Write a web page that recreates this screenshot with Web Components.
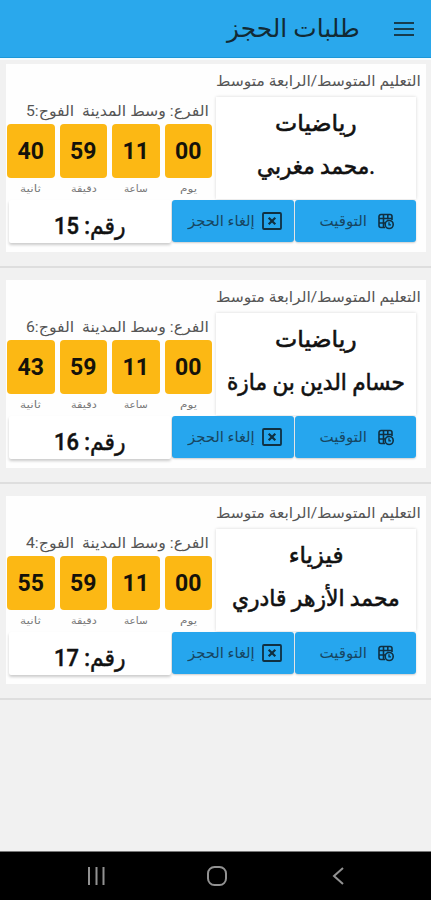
<!DOCTYPE html>
<html lang="ar" dir="rtl">
<head>
<meta charset="utf-8">
<meta name="viewport" content="width=device-width, initial-scale=1">
<title>طلبات الحجز</title>
<style>
  body {
    margin: 0;
    background: #f1f1f1;
    color: #111;
    font-family: Roboto, "DejaVu Sans", sans-serif;
  }
</style>
</head>
<body>
<booking-app></booking-app>

<script>
// One line of text, squeezed or stretched to a given width
class FitText extends HTMLElement {
  constructor() {
    super();
    this.attachShadow({ mode: 'open' });
  }

  connectedCallback() {
    const width = Number(this.getAttribute('width'));
    this.shadowRoot.innerHTML = `
      <style>
        :host { display: flex; width: ${width}px; flex: none; }
        span { display: block; flex: none; transform-origin: 100% 50%; white-space: pre; }
      </style>
      <span><slot></slot></span>
    `;
    const span = this.shadowRoot.querySelector('span');
    span.style.transform = `scaleX(${width / span.offsetWidth})`;
  }
}
customElements.define('fit-text', FitText);

class AppBar extends HTMLElement {
  constructor() {
    super();
    this.attachShadow({ mode: 'open' }).innerHTML = `
      <style>
        :host {
          display: flex;
          box-sizing: border-box;
          height: 60px;
          padding: 0 17px 0 0;
          gap: 34px;
          align-items: center;
          background: #2aa8ec;
          border-bottom: 2px solid #f4fcff;
          box-shadow: inset 0 -1px #1c98d8;
          color: #122a34;
          font-size: 25px;
          line-height: 56px;
        }
        svg { display: block; flex: none; }
      </style>
      <svg width="20" height="14" viewBox="0 0 20 14" stroke="#173c4d" stroke-width="2">
        <path d="M0 1h20M0 7h20M0 13h20"/>
      </svg>
      <slot></slot>
    `;
  }
}
customElements.define('app-bar', AppBar);

class TimeBox extends HTMLElement {
  connectedCallback() {
    this.attachShadow({ mode: 'open' }).innerHTML = `
      <style>
        :host { display: flex; flex-direction: column; align-items: center; }
        b {
          display: block;
          width: 100%;
          height: 54px;
          border-radius: 4px;
          background: #fcb814;
          color: #15120a;
          font: bold 23px/56px Roboto, sans-serif;
          text-align: center;
        }
        fit-text { margin-top: 2px; font-size: 10px; line-height: 18px; color: #777; }
      </style>
      <b>${this.getAttribute('value')}</b>
      <fit-text width="${this.getAttribute('label-width')}">${this.getAttribute('label')}</fit-text>
    `;
  }
}
customElements.define('time-box', TimeBox);

class ActionButton extends HTMLElement {
  constructor() {
    super();
    this.attachShadow({ mode: 'open' }).innerHTML = `
      <style>
        :host {
          display: flex;
          box-sizing: border-box;
          height: 42px;
          align-items: center;
          border-radius: 3px;
          background: #26a6ee;
          box-shadow: 0 1px 2px rgba(0, 0, 0, .2);
          color: #174662;
          font-size: 15px;
          line-height: 40px;
        }
        ::slotted(svg) { margin: var(--icon-margin); }
      </style>
      <slot name="icon"></slot>
      <slot></slot>
    `;
  }
}
customElements.define('action-button', ActionButton);

class BookingCard extends HTMLElement {
  connectedCallback() {
    const get = name => this.getAttribute(name);
    this.attachShadow({ mode: 'open' }).innerHTML = `
      <style>
        :host {
          display: block;
          box-sizing: border-box;
          height: 204px;
          margin-bottom: 12px;
          padding: 0 5px 0 6px;
          border-bottom: 2px solid #dedede;
        }
        .card {
          display: grid;
          box-sizing: border-box;
          height: 188px;
          padding: 0 5px 0 0;
          grid-template-rows: 33px 103px 42px;
          background: #fefefe;
        }
        .level { font-size: 15px; line-height: 35px; color: #555; }
        .middle, .bottom { display: flex; }
        .middle { padding-right: 5px; justify-content: space-between; }
        .lesson {
          display: flex;
          width: 200px;
          height: 102px;
          flex-direction: column;
          align-items: center;
          background: #fff;
          box-shadow: 0 0 3px rgba(0, 0, 0, .16);
          font-size: 23px;
          line-height: 43px;
          color: #111;
          -webkit-text-stroke: .6px #111;
        }
        .lesson fit-text:first-child { margin-top: 5px; }
        .branch { height: 27px; margin-right: 3px; font-size: 15px; line-height: 28px; color: #555; }
        .timer { width: 205px; margin-left: 1px; }
        .boxes { display: grid; grid-template-columns: repeat(4, 1fr); gap: 5px; }
        .bottom { padding-right: 5px; gap: 1px; }
        .time { width: 121px; --icon-margin: 0 22px 0 11px; }
        .cancel { width: 122px; --icon-margin: 0 12px 0 7px; }
        .number {
          display: flex;
          width: 162px;
          height: 43px;
          justify-content: center;
          background: #fff;
          border-radius: 2px;
          box-shadow: 0 2px 3px rgba(0, 0, 0, .2);
          font-size: 24px;
          font-weight: 500;
          line-height: 52px;
          color: #111;
          -webkit-text-stroke: .5px #111;
        }
        svg { display: block; flex: none; fill: none; stroke: #102f40; }
      </style>
      <div class="card">
        <fit-text class="level" width="205">التعليم المتوسط/الرابعة متوسط</fit-text>
        <div class="middle">
          <div class="lesson">
            <fit-text width="${get('subject-width')}">${get('subject')}</fit-text>
            <fit-text width="${get('teacher-width')}">${get('teacher')}</fit-text>
          </div>
          <div class="timer">
            <fit-text class="branch" width="183">الفرع: وسط المدينة  الفوج:${get('group')}</fit-text>
            <div class="boxes">
              <time-box value="00" label="يوم" label-width="17"></time-box>
              <time-box value="11" label="ساعة" label-width="24"></time-box>
              <time-box value="59" label="دقيقة" label-width="26"></time-box>
              <time-box value="${get('seconds')}" label="ثانية" label-width="21"></time-box>
            </div>
          </div>
        </div>
        <div class="bottom">
          <action-button class="time">
            <svg slot="icon" width="16" height="17" viewBox="0 0 16 17" stroke-width="1.6">
              <path d="M7 14.500H3a2 2 0 0 1-2-2V3.500a2 2 0 0 1 2-2h9a2 2 0 0 1 2 2V7M1 5.500h13M1 10h6M5.500 1.500v13M9.800 1.500v5"/>
              <circle cx="11.200" cy="11.500" r="4"/>
              <path d="M11 9.300v2.500h2" stroke-width="1.3"/>
            </svg>
            <fit-text width="47">التوقيت</fit-text>
          </action-button>
          <action-button class="cancel">
            <svg slot="icon" width="20" height="18" viewBox="0 0 20 18" stroke-width="1.8">
              <rect x="1" y="1" width="18" height="16" rx="1"/>
              <path d="M6.7 5.7l6.600 6.600M13.3 5.7l-6.600 6.600" stroke-width="2.2"/>
            </svg>
            <fit-text width="67">إلغاء الحجز</fit-text>
          </action-button>
          <div class="number"><fit-text width="72">رقم: ${get('number')}</fit-text></div>
        </div>
      </div>
    `;
  }
}
customElements.define('booking-card', BookingCard);

class NavBar extends HTMLElement {
  constructor() {
    super();
    this.attachShadow({ mode: 'open' }).innerHTML = `
      <style>
        :host {
          display: flex;
          box-sizing: border-box;
          height: 49px;
          padding-left: 87px;
          direction: ltr;
          align-items: center;
          background: #000;
          border-top: 1px solid #777;
        }
        svg { display: block; flex: none; fill: none; stroke: #929292; stroke-width: 2; }
        .home { margin: 0 105px 0 102px; }
      </style>
      <svg width="18" height="18"><path d="M2 0v18M9.500 0v18M16.500 0v18"/></svg>
      <svg class="home" width="20" height="20"><rect x="1" y="1" width="18" height="18" rx="6.500"/></svg>
      <svg width="12" height="18"><path d="M11 1L2 9l9 8"/></svg>
    `;
  }
}
customElements.define('nav-bar', NavBar);

class BookingApp extends HTMLElement {
  connectedCallback() {
    this.attachShadow({ mode: 'open' }).innerHTML = `
      <style>
        :host { display: flex; height: 900px; flex-direction: column; overflow: hidden; }
        main { flex: 1; padding-top: 4px; }
      </style>
      <app-bar><fit-text width="133">طلبات الحجز</fit-text></app-bar>
      <main>
        <booking-card subject="رياضيات" subject-width="82" teacher=".محمد مغربي" teacher-width="118"
          group="5" seconds="40" number="15"></booking-card>
        <booking-card subject="رياضيات" subject-width="82" teacher="حسام الدين بن مازة" teacher-width="178"
          group="6" seconds="43" number="16"></booking-card>
        <booking-card subject="فيزياء" subject-width="55" teacher="محمد الأزهر قادري" teacher-width="168"
          group="4" seconds="55" number="17"></booking-card>
      </main>
      <nav-bar></nav-bar>
    `;
  }
}
customElements.define('booking-app', BookingApp);
</script>
</body>
</html>
